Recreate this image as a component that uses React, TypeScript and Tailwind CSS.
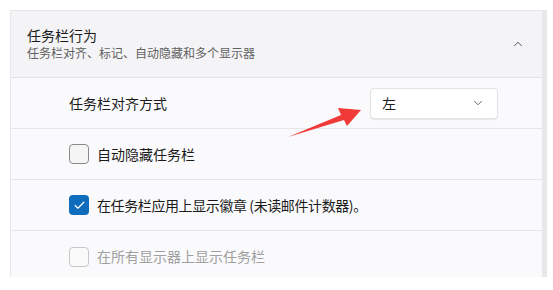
import { ChevronDown, ChevronUp, Check } from 'lucide-react'

const font = { fontFamily: '"Noto Sans CJK SC", "Noto Sans", sans-serif' }

function Row({ children, last }: { children: React.ReactNode; last?: boolean }) {
  return (
    <div className={`flex items-center h-[51px] pl-[58px] pr-[44px] ${last ? '' : 'border-b border-[#e6e6e8]'}`}>
      {children}
    </div>
  )
}

export default function App() {
  return (
    <div className="relative w-[553px] h-[290px] bg-white" style={font}>
      <div className="absolute left-[10px] top-[10px] w-[537px] h-[267px] overflow-hidden border border-r-[5px] border-b-0 border-[#e8e8ea] bg-[#fafafc]">
        {/* header */}
        <div className="flex items-center h-[67px] pl-[16px] pr-[17px] bg-[#f4f4f6] border-b border-[#e2e2e4]">
          <div className="flex-1">
            <div className="text-[14px] leading-[18px] text-[#1b1b1b]">任务栏行为</div>
            <div className="text-[12px] leading-[18px] text-[#606060]">任务栏对齐、标记、自动隐藏和多个显示器</div>
          </div>
          <ChevronUp className="w-[14px] h-[14px] text-[#333]" strokeWidth={1.4} />
        </div>

        <Row>
          <span className="flex-1 text-[14px] text-[#1b1b1b]">任务栏对齐方式</span>
          <div className="flex items-center w-[128px] h-[31px] pl-[11px] pr-[12px] bg-white border border-[#e3e3e3] rounded-[4px] shadow-[0_1px_1px_rgba(0,0,0,0.08)]">
            <span className="flex-1 text-[14px] text-[#1b1b1b]">左</span>
            <ChevronDown className="w-[14px] h-[14px] text-[#444]" strokeWidth={1.4} />
          </div>
        </Row>

        <Row>
          <div className="w-[20px] h-[20px] rounded-[4px] border border-[#8a8a8a] bg-[#f5f5f5]" />
          <span className="ml-[8px] text-[14px] text-[#1b1b1b]">自动隐藏任务栏</span>
        </Row>

        <Row>
          <div className="flex items-center justify-center w-[20px] h-[20px] rounded-[4px] bg-[#0f6cbd]">
            <Check className="w-[13px] h-[13px] text-white" strokeWidth={2.2} />
          </div>
          <span className="ml-[8px] text-[14px] tracking-[-0.4px] text-[#1b1b1b]">在任务栏应用上显示徽章 (未读邮件计数器)。</span>
        </Row>

        <Row last>
          <div className="w-[20px] h-[20px] rounded-[4px] border border-[#c8c8c8] bg-[#fafafa]" />
          <span className="ml-[8px] text-[14px] text-[#a0a0a0]">在所有显示器上显示任务栏</span>
        </Row>
      </div>

      {/* red annotation arrow */}
      <svg className="absolute left-0 top-0" width="553" height="290">
        <polygon points="288,137 341,115 338,108 361,110 347,126 344,120" fill="#f03a37" />
      </svg>
    </div>
  )
}
